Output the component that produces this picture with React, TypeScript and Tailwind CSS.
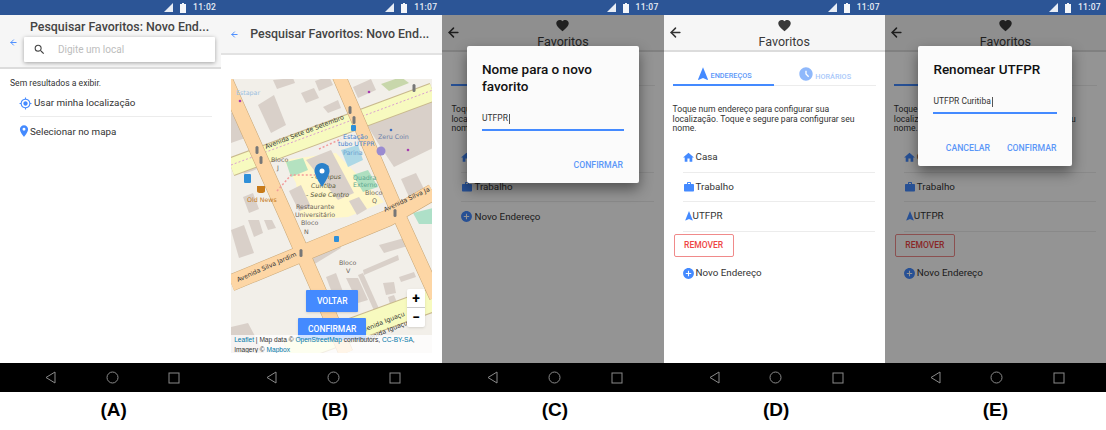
import { ReactNode } from "react";
import { ArrowLeft } from "lucide-react";
import { MdAccessTimeFilled, MdAddCircle, MdFavorite, MdGpsFixed, MdHome, MdNavigation, MdPlace, MdSearch, MdWork } from "react-icons/md";

const StatusBar = ({ time }: { time: string }) => (
  <div className="relative z-20 flex h-[15px] shrink-0 items-center justify-end gap-[4px] bg-[#2c5596] pr-[5px] text-[8.5px] font-medium text-[#e8edf5]">
    <svg width="9" height="9" viewBox="0 0 9 9">
      <path d="M9 0V9H0Z" fill="#e8edf5" />
    </svg>
    <svg width="6" height="10" viewBox="0 0 6 10" className="ml-[3px]">
      <path d="M2 0H4V1H6V10H0V1H2Z" fill="#f4f6fa" />
    </svg>
    <span className="ml-[3px] tracking-[0.3px]">{time}</span>
  </div>
);

const NavBar = () => (
  <div className="relative z-20 flex h-[29px] shrink-0 items-center justify-between bg-black pl-[45px] pr-[41px]">
    <svg width="11" height="13" viewBox="0 0 11 13" fill="none" stroke="#8a8a8a" strokeWidth="1">
      <path d="M10 1V12L1 6.5Z" />
    </svg>
    <svg width="13" height="13" viewBox="0 0 13 13" fill="none" stroke="#8a8a8a" strokeWidth="1">
      <circle cx="6.5" cy="6.5" r="5.5" />
    </svg>
    <svg width="12" height="12" viewBox="0 0 12 12" fill="none" stroke="#8a8a8a" strokeWidth="1">
      <rect x="1" y="1" width="10" height="10" />
    </svg>
  </div>
);

const FavoritosHeader = () => (
  <div className="relative flex h-[37px] shrink-0 flex-col items-center border-b-2 border-[#dcdcdc] bg-[#f6f6f6] pl-[20px]">
    <ArrowLeft size={15} strokeWidth={2.4} className="absolute left-[4px] top-[10px] text-[#333]" />
    <MdFavorite size={15} className="mt-[3px] text-[#3a3a3a]" />
    <span className="mt-[1px] text-[12.5px] leading-[15px] text-[#3a3a3a]">Favoritos</span>
  </div>
);

const Tabs = () => (
  <div className="mx-[9px] mt-[15px] flex h-[19px] border-b border-[#ececec]">
    <div className="-mb-px flex w-[101px] items-center justify-center border-b-2 border-[#448aff] pb-[2px] text-[7.3px] font-medium text-[#5b97f8]">
      <MdNavigation size={16} className="-mt-[2px] text-[#448aff]" />
      <span className="mt-[4px]">ENDEREÇOS</span>
    </div>
    <div className="flex flex-1 items-center justify-center gap-[1px] pb-[2px] text-[7.3px] font-medium text-[#a9c8fa]">
      <MdAccessTimeFilled size={16} className="-mt-[2px] text-[#8fb8fb]" />
      <span className="mt-[4px]">HORÁRIOS</span>
    </div>
  </div>
);

const Row = ({ icon, label, border = true }: { icon: ReactNode; label: string; border?: boolean }) => (
  <div className={`flex h-[29.3px] items-center text-[9.8px] text-[#333] ${border ? "border-b border-[#ececec]" : ""}`}>
    {icon}
    <span>{label}</span>
  </div>
);

const homeIcon = <MdHome size={13} className="-ml-px mr-px text-[#448aff]" />;
const workIcon = <MdWork size={12} className="mr-px text-[#448aff]" />;
const navIcon = <MdNavigation size={12} className="-mr-[2px] text-[#448aff]" />;
const addIcon = <MdAddCircle size={13} className="-ml-px mr-px text-[#448aff]" />;

const Favoritos = ({ withUtfpr }: { withUtfpr: boolean }) => (
  <div className="flex h-full flex-col">
    <FavoritosHeader />
    <Tabs />
    <p className="mx-[9px] mt-[19px] text-[8.6px] leading-[9.7px] text-[#333]">
      Toque num endereço para configurar sua localização. Toque e segure para configurar seu nome.
    </p>
    <div className="ml-[19px] mr-[10px] mt-[9.5px]">
      <Row icon={homeIcon} label="Casa" />
      <Row icon={workIcon} label="Trabalho" />
      {withUtfpr ? (
        <>
          <Row icon={navIcon} label="UTFPR" />
          <button className="-ml-[9px] mt-[2px] block h-[23px] w-[60px] rounded-[2px] border border-[#f08a8a] text-[8.5px] font-medium text-[#ee4444]">
            REMOVER
          </button>
          <div className="mt-[2px]">
            <Row icon={addIcon} label="Novo Endereço" border={false} />
          </div>
        </>
      ) : (
        <Row icon={addIcon} label="Novo Endereço" border={false} />
      )}
    </div>
  </div>
);

const Dialog = ({ width, title, value, actions }: { width: string; title: ReactNode; value: string; actions: string[] }) => (
  <div className="absolute inset-x-0 top-[31px] z-10 flex justify-center">
    <div className={`${width} rounded-[2px] bg-[#fbfbfb] px-[15px] pt-[15px] shadow-[0_6px_14px_rgba(0,0,0,0.45)]`}>
      <h2 className="text-[13.5px] font-medium leading-[17px] text-[#111]">{title}</h2>
      <div className="mt-[16px] flex h-[20px] items-center border-b-2 border-[#448aff] pb-[3px] text-[8.5px] text-[#333]">
        {value}
        <span className="ml-px h-[10px] w-px bg-[#555]" />
      </div>
      <div className="mt-[29px] flex justify-end gap-[17px] pb-[13px] pr-px text-[8.7px] font-medium leading-[10px] text-[#5b97f8]">
        {actions.map((action) => (
          <span key={action}>{action}</span>
        ))}
      </div>
    </div>
  </div>
);

const Dimmed = ({ children }: { children: ReactNode }) => (
  <>
    <div className="absolute inset-0 z-[5] bg-black/[0.42]" />
    {children}
  </>
);

const buildings = [
  "M27 26L43 16L55 46L40 54Z",
  "M42 1L62 -1L64 4L46 10Z",
  "M70 14L83 9L88 19L75 24Z",
  "M84 2L98 -3L102 6L88 12Z",
  "M92 28L107 21L110 29L97 34Z",
  "M122 8L140 0L145 11L127 19Z",
  "M133 41L202 11V69L163 88L147 64Z",
  "M0 34L7 31L17 58L0 64Z",
  "M8 82L20 78L26 90L13 95Z",
  "M75 81L100 71L123 114L107 121Z",
  "M58 112L70 106L80 128L68 132Z",
  "M118 122L128 118L136 130L126 136Z",
  "M0 151L13 146L23 174L8 179Z",
  "M17 141L28 141L32 154L23 158Z",
  "M33 141L41 141L45 149L37 151Z",
  "M12 118L22 114L28 130L18 134Z",
  "M78 179L107 163L110 169L82 186Z",
  "M127 196L132 194L150 234L145 236Z",
  "M148 166L177 158L180 166L153 174Z",
  "M132 191L167 176L168 181L133 196Z",
  "M152 204L163 203L165 214L155 216Z",
  "M168 198L183 193L185 198L170 203Z",
  "M157 218L163 216L168 229L160 229Z",
  "M95 198L105 194L115 221L105 224Z",
  "M115 199L127 199L137 221L127 224Z",
  "M0 248L17 244L33 274H0Z",
  "M170 100L185 94L194 112L178 118Z",
];

const signals = [
  [119, 31],
  [123, 41],
  [183, 9],
  [26, 71],
  [30, 81],
  [70, 174],
  [164, 134],
];

const MapView = () => (
  <div className="relative mx-[10px] h-[274px] overflow-hidden bg-[#f2efe9]">
    <svg className="absolute inset-0" width="202" height="274" viewBox="0 0 202 274">
      <path d="M53 81L105 74L153 123L117 138L70 141L65 104Z" fill="#fff7c9" />
      <g fill="#d9d0c9">
        {buildings.map((d) => (
          <path key={d} d={d} />
        ))}
      </g>
      <path d="M55 83L72 79L77 91L60 98Z" fill="#b4e2c0" />
      <path d="M122 96L137 91L147 108L132 113Z" fill="#aedfc0" />
      <path d="M110 71L127 66L132 81L117 88Z" fill="#add8e6" />
      <path d="M182 134L202 129V145H188Z" fill="#aee0c8" />
      <path d="M150 5L170 -2L178 4L158 12Z" fill="#c8d7ab" />
      <path d="M0 88L202 13" stroke="#c9b98e" strokeWidth="19" />
      <path d="M0 88L202 13" stroke="#f7fabf" strokeWidth="17" />
      <path d="M0 86L202 11" stroke="#d99fd0" strokeWidth="1" strokeDasharray="2 2" />
      <path d="M57 274L202 221" stroke="#c9b98e" strokeWidth="24" />
      <path d="M57 274L202 221" stroke="#f7fabf" strokeWidth="22" />
      <g fill="none" stroke="#c8a777">
        <path d="M-6 0L57 141L115 274" strokeWidth="15" />
        <path d="M107 -5L170 141L205 218" strokeWidth="14" />
        <path d="M0 204L157 139L202 113" strokeWidth="17" />
      </g>
      <g fill="none" stroke="#fdd6a5">
        <path d="M-6 0L57 141L115 274" strokeWidth="14" />
        <path d="M107 -5L170 141L205 218" strokeWidth="13" />
        <path d="M0 204L157 139L202 113" strokeWidth="16" />
      </g>
      <path d="M46 112L60 96H84M88 70L110 60" stroke="#f29a9a" strokeWidth="1.5" strokeDasharray="2 2" fill="none" />
      {signals.map(([x, y]) => (
        <rect key={`${x}-${y}`} x={x - 1.5} y={y - 4} width="3" height="8" rx="1.5" fill="#777" />
      ))}
      <circle cx="9" cy="22" r="1.3" fill="#a83cb0" />
      <circle cx="138" cy="13" r="1.3" fill="#a83cb0" />
      <circle cx="177" cy="71" r="1.3" fill="#a83cb0" />
      <circle cx="160" cy="51" r="1.3" fill="#3f6fc0" />
      <circle cx="150" cy="72" r="4.5" fill="#9a8bd0" />
      <rect x="13" y="95" width="7" height="9" rx="1" fill="#2f8fd8" />
      <rect x="120" y="46" width="5" height="6" rx="1" fill="#2f8fd8" />
      <rect x="103" y="157" width="5" height="6" rx="1" fill="#2f8fd8" />
      <path d="M26 107H34V112Q34 114 30 114Q26 114 26 112Z" fill="#c77a1a" />
      <g fontFamily="'DejaVu Sans', sans-serif" fontSize="6.3" fill="#333">
        <text transform="translate(35 70) rotate(-21)">Avenida Sete de Setembro</text>
        <text transform="translate(154 133) rotate(-25)">Avenida Silva Ja</text>
        <text transform="translate(7 203) rotate(-24)">Avenida Silva Jardim</text>
        <text transform="translate(133 253) rotate(-22)">venida Iguaçu</text>
        <text transform="translate(136 262) rotate(-22)">venida Iguaçu</text>
        <g fill="#6c6459">
          <text x="40" y="83">Bloco</text>
          <text x="46" y="91">J</text>
          <text x="65" y="130">Restaurante</text>
          <text x="64" y="138">Universitário</text>
          <text x="70" y="146">Bloco</text>
          <text x="73" y="155">N</text>
          <text x="134" y="116">Bloco</text>
          <text x="141" y="124">Q</text>
          <text x="108" y="186">Bloco</text>
          <text x="115" y="194">V</text>
        </g>
        <g fill="#5a5a3a" fontStyle="italic">
          <text x="90" y="91">PR</text>
          <text x="80" y="100">- Campus</text>
          <text x="80" y="109">Curitiba</text>
          <text x="75" y="118">- Sede Centro</text>
        </g>
        <g fill="#3f80d0">
          <text x="112" y="60">Estação</text>
          <text x="107" y="67">tubo UTFPR</text>
          <text x="112" y="76" fill="#6a9fd0">Parina</text>
          <text x="147" y="60" fill="#6d7fa8">Zeru Coin</text>
        </g>
        <text x="122" y="101" fill="#5da890">Quadra</text>
        <text x="122" y="108" fill="#5da890">Externo</text>
        <text x="16" y="123" fill="#c77a1a">Old News</text>
        <text x="5" y="16" fill="#9ac0e0">Estapar</text>
      </g>
      <path d="M91 84C86 84 83.5 88 83.5 92C83.5 97 91 108 91 108C91 108 98.5 97 98.5 92C98.5 88 96 84 91 84Z" fill="#2a81cb" />
      <circle cx="91" cy="92" r="2.5" fill="#fff" />
    </svg>
    <div className="absolute left-[75px] top-[211px] flex h-[22px] w-[52px] items-center justify-center rounded-[1px] bg-[#448aff] text-[8.5px] font-medium text-white shadow">
      VOLTAR
    </div>
    <div className="absolute left-[67px] top-[239px] flex h-[22px] w-[68px] items-center justify-center rounded-[1px] bg-[#448aff] text-[8.5px] font-medium text-white shadow">
      CONFIRMAR
    </div>
    <div className="absolute left-[176px] top-[210px] flex w-[18px] flex-col rounded-[2px] bg-white text-center text-[14px] font-bold leading-[18px] text-black shadow">
      <span className="h-[19px] border-b border-[#ccc]">+</span>
      <span className="h-[19px]">−</span>
    </div>
    <div className="absolute inset-x-0 bottom-0 h-[18px] bg-white/75 pl-[3px] text-[6.6px] leading-[9.5px] text-[#333]" style={{ fontFamily: "'Liberation Sans', sans-serif" }}>
      <span className="text-[#0078a8]">Leaflet</span> | Map data © <span className="text-[#0078a8]">OpenStreetMap</span> contributors, <span className="text-[#0078a8]">CC-BY-SA</span>,
      <br />
      Imagery © <span className="text-[#0078a8]">Mapbox</span>
    </div>
  </div>
);

const SearchPanel = () => (
  <div className="flex h-full flex-col">
    <div className="relative h-[54px] shrink-0 border-b-2 border-[#dcdcdc] bg-[#f6f6f6]">
      <ArrowLeft size={9} strokeWidth={2.5} className="absolute left-[9px] top-[23px] text-[#448aff]" />
      <p className="pl-[30px] pt-[4px] text-[12.4px] font-medium leading-[16px] text-[#444]">Pesquisar Favoritos: Novo End...</p>
      <div className="ml-[24px] mt-[2px] flex h-[25px] w-[191px] items-center rounded-[1px] bg-white shadow-[0_1px_4px_rgba(0,0,0,0.35)]">
        <MdSearch size={13} className="ml-[9px] text-[#444]" />
        <span className="ml-[12px] text-[10px] text-[#bdbdbd]">Digite um local</span>
      </div>
    </div>
    <p className="ml-[10px] mt-[9px] text-[8.6px] leading-[11px] text-[#333]">Sem resultados a exibir.</p>
    <div className="ml-[20px] mr-[9px]">
      <div className="flex h-[28px] items-center gap-[2px] border-b border-[#ececec] pt-[1px] text-[9.8px] text-[#333]">
        <MdGpsFixed size={13} className="-ml-px text-[#448aff]" />
        <span>Usar minha localização</span>
      </div>
      <div className="flex h-[30px] items-center text-[9.8px] text-[#333]">
        <MdPlace size={14} className="-ml-[3px] -mr-px -mt-[3px] text-[#448aff]" />
        <span>Selecionar no mapa</span>
      </div>
    </div>
  </div>
);

const MapPanel = () => (
  <div className="flex h-full flex-col">
    <div className="relative h-[40px] shrink-0 border-b-2 border-[#e2e2e2] bg-[#f6f6f6]">
      <ArrowLeft size={9} strokeWidth={2.5} className="absolute left-[9px] top-[15px] text-[#448aff]" />
      <p className="pl-[29px] pt-[11px] text-[12.4px] font-medium leading-[16px] text-[#444]">Pesquisar Favoritos: Novo End...</p>
    </div>
    <div className="mt-[24px]">
      <MapView />
    </div>
  </div>
);

const Phone = ({ time, label, labelPad, children }: { time: string; label: string; labelPad: string; children: ReactNode }) => (
  <div className="flex h-[430px] flex-col">
    <StatusBar time={time} />
    <div className="relative h-[348px] shrink-0 overflow-hidden bg-white">{children}</div>
    <NavBar />
    <div className={`${labelPad} flex flex-1 items-center justify-center pb-[2px] text-[19px] font-bold text-black`} style={{ fontFamily: "'Liberation Sans', sans-serif" }}>
      {label}
    </div>
  </div>
);

export default function App() {
  return (
    <div className="grid h-[430px] w-[1106px] grid-cols-5 overflow-hidden bg-white font-['Roboto',sans-serif]">
      <Phone time="11:02" label="(A)" labelPad="pl-[6px]">
        <SearchPanel />
      </Phone>
      <Phone time="11:07" label="(B)" labelPad="pl-[6px]">
        <MapPanel />
      </Phone>
      <Phone time="11:07" label="(C)" labelPad="pl-[4px]">
        <Favoritos withUtfpr={false} />
        <Dimmed>
          <Dialog
            width="w-[172px]"
            title={
              <>
                Nome para o novo
                <br />
                favorito
              </>
            }
            value="UTFPR"
            actions={["CONFIRMAR"]}
          />
        </Dimmed>
      </Phone>
      <Phone time="11:07" label="(D)" labelPad="pl-[4px]">
        <Favoritos withUtfpr />
      </Phone>
      <Phone time="11:07" label="(E)" labelPad="pl-0">
        <Favoritos withUtfpr />
        <Dimmed>
          <Dialog width="w-[154px]" title="Renomear UTFPR" value="UTFPR Curitiba" actions={["CANCELAR", "CONFIRMAR"]} />
        </Dimmed>
      </Phone>
    </div>
  );
}
